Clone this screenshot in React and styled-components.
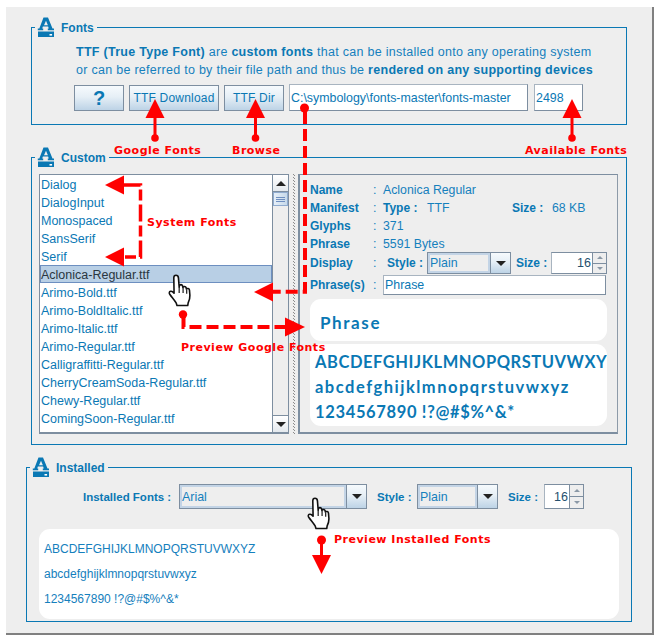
import React from 'react';
import styled, { createGlobalStyle } from 'styled-components';

const BLUE = '#0a78b4';
const EDGE = '#7d8ea0';
const SANS = '"Liberation Sans", Arial, sans-serif';

const Global = createGlobalStyle`
  html, body { margin: 0; padding: 0; background: #fff; }
  body { font-family: ${SANS}; }
`;

const Stage = styled.div`
  position: relative;
  width: 661px;
  height: 641px;
  padding: 7px 0 0 6px;
  box-sizing: border-box;
  overflow: hidden;
`;

const Win = styled.div`
  width: 648px;
  height: 628px;
  box-sizing: border-box;
  background: #eeeeee;
  border-right: 2px solid #808080;
  border-bottom: 2px solid #808080;
  padding: 20px 0 0 25px;
  display: flex;
  flex-direction: column;
  align-items: flex-start;
`;

const Group = styled.section`
  position: relative;
  box-sizing: border-box;
  border: 1px solid ${BLUE};
  width: ${p => p.$w}px;
  height: ${p => p.$h}px;
  margin: ${p => p.$m || '0'};
  padding: ${p => p.$pad || '0'};
`;

const Legend = styled.div`
  position: absolute;
  left: 3px;
  top: -11px;
  height: 20px;
  display: flex;
  align-items: center;
  gap: 6px;
  padding: 0 3px 0 2px;
  background: #eeeeee;
  color: ${BLUE};
  font: bold 12px ${SANS};
`;

const LegendText = styled.span`
  position: relative;
  top: 1px;
`;

const Intro = styled.p`
  margin: 0;
  color: #1580bd;
  font-size: 12.5px;
  line-height: 18px;
  letter-spacing: 0.28px;
  white-space: nowrap;
  b { color: ${BLUE}; }
`;

const ToolRow = styled.div`
  display: flex;
  align-items: flex-end;
  gap: 5px;
  margin: 5px 0 0 -2px;
`;

const Btn = styled.div`
  box-sizing: border-box;
  width: ${p => p.$w}px;
  height: 26px;
  border: 1px solid ${EDGE};
  background: linear-gradient(#f6fafd 0%, #e6eff6 45%, #bdd3e6 100%);
  color: ${BLUE};
  font-size: ${p => p.$big ? '20px' : '12px'};
  font-weight: ${p => p.$big ? 'bold' : 'normal'};
  letter-spacing: ${p => p.$big ? '0' : '0.2px'};
  display: flex;
  align-items: center;
  justify-content: center;
  white-space: nowrap;
`;

const TextBox = styled.div`
  box-sizing: border-box;
  width: ${p => p.$w}px;
  height: ${p => p.$h || 27}px;
  margin-left: ${p => p.$ml || 0}px;
  background: #fff;
  border: 1px solid ${EDGE};
  border-left-color: #a8b4c0;
  border-top-color: #a8b4c0;
  color: ${BLUE};
  font-size: 12.4px;
  padding-left: 1px;
  display: flex;
  align-items: center;
  white-space: nowrap;
  overflow: hidden;
`;

const Split = styled.div`
  display: flex;
  height: 260px;
`;

const ListFrame = styled.div`
  box-sizing: border-box;
  width: 250px;
  height: 260px;
  border: 1px solid ${EDGE};
  border-bottom-width: 2px;
  background: #fff;
  display: flex;
`;

const List = styled.ul`
  list-style: none;
  margin: 0;
  padding: 0;
  flex: 1;
  min-width: 0;
`;

const Item = styled.li`
  box-sizing: border-box;
  height: 18px;
  padding: 1px 0 0 1px;
  line-height: 18px;
  font-size: 12.5px;
  white-space: nowrap;
  color: ${p => p.$sel ? '#2a3640' : BLUE};
  background: ${p => p.$sel ? '#b8cfe5' : 'transparent'};
  box-shadow: ${p => p.$sel ? 'inset 0 0 0 1px #6d8fc0' : 'none'};
`;

const ScrollBar = styled.div`
  width: 15px;
  background: #eeeeee;
  border-left: 1px solid ${EDGE};
  display: flex;
  flex-direction: column;
`;

const ScrollEnd = styled.div`
  height: 17px;
  box-sizing: border-box;
  background: linear-gradient(#ffffff, #e4e9ee);
  display: flex;
  align-items: center;
  justify-content: center;
  border-${p => p.$down ? 'top' : 'bottom'}: 1px solid ${EDGE};
`;

const ScrollThumb = styled.div`
  height: 14px;
  box-sizing: border-box;
  background: linear-gradient(90deg, #e6eff8, #c6d9ea);
  border: 1px solid #8fabcf;
  display: flex;
  flex-direction: column;
  gap: 1px;
  align-items: center;
  justify-content: center;
  i { display: block; width: 9px; height: 1px; background: #6f8fc0; }
`;

const ScrollTrack = styled.div`
  flex: 1;
`;

const Arrow = styled.span`
  width: 0;
  height: 0;
  border-left: ${p => p.$s || 4}px solid transparent;
  border-right: ${p => p.$s || 4}px solid transparent;
  ${p => p.$up
    ? `border-bottom: ${p.$t || 4}px solid ${p.$c || '#222'};`
    : `border-top: ${p.$t || 4}px solid ${p.$c || '#222'};`}
`;

const Divider = styled.div`
  width: 9px;
  background-color: #eeeeee;
  background-image:
    repeating-linear-gradient(#8c8c8c 0 1px, transparent 1px 3px),
    repeating-linear-gradient(transparent 0 1px, #8c8c8c 1px 2px, transparent 2px 3px);
  background-size: 1px 100%, 1px 100%;
  background-position: 4px 0, 5px 0;
  background-repeat: no-repeat;
`;

const Detail = styled.div`
  box-sizing: border-box;
  width: 320px;
  height: 260px;
  border: 1px solid ${EDGE};
  border-left-width: 2px;
  border-bottom-width: 2px;
  border-right-color: #8d9aa8;
  padding: 6px 10px 0 10px;
  display: flex;
  flex-direction: column;
`;

const Info = styled.div`
  display: flex;
  align-items: center;
  height: ${p => p.$h || 18}px;
  font-size: 12.3px;
  color: #1580bd;
  white-space: nowrap;
  margin-top: ${p => p.$mt || 0}px;
`;

const Key = styled.b`
  width: 63px;
  font-size: 12px;
  color: ${BLUE};
`;

const Colon = styled.span`
  width: 10px;
`;

const Strong = styled.b`
  color: ${BLUE};
  font-size: 12px;
  width: ${p => p.$w ? p.$w + 'px' : 'auto'};
  margin-left: ${p => p.$ml || 0}px;
  flex: none;
`;

const Plainv = styled.span`
  width: ${p => p.$w ? p.$w + 'px' : 'auto'};
  flex: none;
`;

const Combo = styled.div`
  box-sizing: border-box;
  display: flex;
  width: ${p => p.$w}px;
  height: ${p => p.$h || 25}px;
  border: 1px solid ${EDGE};
  background: #eeeeee;
  flex: none;
`;

const ComboValue = styled.div`
  flex: 1;
  min-width: 0;
  box-sizing: border-box;
  border: 2px solid #c3d4e6;
  color: #1580bd;
  font-size: 12.4px;
  display: flex;
  align-items: center;
`;

const ComboBtn = styled.div`
  width: 19px;
  border-left: 1px solid ${EDGE};
  background: linear-gradient(#f6fafd, #e6eff6 45%, #bdd3e6);
  display: flex;
  align-items: center;
  justify-content: center;
`;

const Spinner = styled.div`
  box-sizing: border-box;
  display: flex;
  width: ${p => p.$w}px;
  height: ${p => p.$h || 25}px;
  background: #fff;
  border-top: 1px solid ${EDGE};
  border-left: 1px solid #a8b4c0;
  border-bottom: 1px solid ${EDGE};
  flex: none;
`;

const SpinValue = styled.div`
  flex: 1;
  display: flex;
  align-items: center;
  justify-content: flex-end;
  color: #26506e;
  font-size: 12.5px;
  padding-right: 1px;
`;

const SpinBtns = styled.div`
  width: 15px;
  box-sizing: border-box;
  display: flex;
  flex-direction: column;
  border: 1px solid ${EDGE};
  margin: -1px 0;
`;

const SpinBtn = styled.div`
  flex: 1;
  background: #eeeeee;
  display: flex;
  align-items: center;
  justify-content: center;
  ${p => p.$sep ? `border-top: 1px solid ${EDGE};` : ''}
`;

const Card = styled.div`
  background: #fff;
  border-radius: 11px;
  box-sizing: border-box;
  height: ${p => p.$h}px;
  margin-top: ${p => p.$mt || 0}px;
  padding: ${p => p.$pad || '0'};
  overflow: hidden;
`;

const PhraseText = styled.div`
  font: bold 17px Lato, sans-serif;
  color: ${BLUE};
  letter-spacing: 1.6px;
  padding: 13px 0 0 10px;
`;

const Glyphs = styled.div`
  padding-left: 5px;
  font: bold 16.5px/25px Lato, sans-serif;
  color: ${BLUE};
  white-space: nowrap;
  letter-spacing: ${p => p.$ls || 0}px;
  height: 25px;
`;

const InstalledRow = styled.div`
  display: flex;
  align-items: center;
  margin: 16px 0 0 56px;
  height: 25px;
  color: ${BLUE};
  white-space: nowrap;
`;

const RowLabel = styled.b`
  font-size: 11.5px;
  flex: none;
  width: ${p => p.$w}px;
  margin-left: ${p => p.$ml || 0}px;
`;

const InstalledCard = styled.div`
  background: #fff;
  border-radius: 11px;
  box-sizing: border-box;
  margin: 20px 0 0 12px;
  width: 580px;
  height: 90px;
  padding: 8px 0 0 5px;
  color: #1580bd;
  font-size: 12px;
`;

const SampleLine = styled.div`
  height: 25px;
  line-height: 24px;
  white-space: nowrap;
`;

const Note = styled.span`
  position: absolute;
  left: ${p => p.$x}px;
  top: ${p => p.$y}px;
  color: #ff0000;
  font: bold 11px/14px "DejaVu Sans", Verdana, sans-serif;
  white-space: nowrap;
  letter-spacing: 0.5px;
`;

const Overlay = styled.svg`
  position: absolute;
  left: 0;
  top: 0;
  pointer-events: none;
`;

const FontIcon = () => (
  <svg width="18" height="20" viewBox="0 0 18 20">
    <path
      d="M6.500 0.500h4.500l4.500 11h1.500v1.700h-6.200v-1.700h1l-.7-2h-5.200l-.7 2h1v1.700H.800v-1.700h1.500zM9 3.700l-2 4.500h3.900z"
      fill={BLUE}
      fillRule="evenodd"
    />
    <path d="M1 14.500h16V20H1z" fill={BLUE} />
    <rect x="12.500" y="17" width="2.600" height="1.600" fill="#fff" />
  </svg>
);

const HAND = 'M5.500 1.200c1.100 0 1.600.8 1.700 1.800l.5 6.300.2-.9c.3-1 1.800-1 2.100.1l.3 1.100c.3-.9 1.900-.9 2.200.2l.2.9c.5-.7 2-.4 2.100.7l.3 3.600c.1 1.900-.4 3.600-1.200 5.200l-.3 1.900H6.200l-.5-1.600C4.600 18.500 2.700 16.500 1.200 14.300c-.6-1-.3-1.800.5-2 .8-.3 1.700.3 2.500 1.300L4 3c0-1 .5-1.800 1.500-1.800z';

const Hand = ({ x, y }) => (
  <g transform={`translate(${x} ${y}) scale(1.45)`}>
    <path d={HAND} fill="#fff" stroke="#111" strokeWidth="1.100" strokeLinejoin="round" />
    <path d="M7.700 9.300v4.200M10.400 10v3.500M12.900 11v3" stroke="#111" strokeWidth=".8" fill="none" />
  </g>
);

const RED = '#ff0000';

const UpPin = ({ x, tip, end }) => (
  <g>
    <path d={`M${x} ${tip}l9.500 19h-19z`} fill={RED} />
    <path d={`M${x} ${tip + 18}V${end}`} stroke={RED} strokeWidth="3" />
    <circle cx={x} cy={end} r="3.800" fill={RED} />
  </g>
);

const Annotations = () => (
  <Overlay width="661" height="641" viewBox="0 0 661 641">
    <UpPin x={155} tip={99} end={138} />
    <UpPin x={255.5} tip={99} end={138} />
    <UpPin x={572} tip={99} end={138} />

    <circle cx={304.500} cy={108} r="4.500" fill={RED} />
    <path d="M305 112V291.700H272" stroke={RED} strokeWidth="4" strokeDasharray="12 5" fill="none" />
    <path d="M254 292l19-9.500v19z" fill={RED} />

    <path d="M124 185H140.500V257H124" stroke={RED} strokeWidth="3.500" strokeDasharray="17 4 11 4" fill="none" />
    <path d="M105 185l19-9.500v19z" fill={RED} />
    <path d="M105 257l19-9.500v19z" fill={RED} />

    <Hand x={168} y={273.5} />

    <circle cx={183} cy={314.500} r="4.200" fill={RED} />
    <path d="M183.500 316V327H286" stroke={RED} strokeWidth="4" strokeDasharray="12 5" fill="none" />
    <path d="M305 327l-20-9.500v19z" fill={RED} />

    <Hand x={307} y={496.5} />

    <circle cx={321.500} cy={540} r="4.500" fill={RED} />
    <path d="M321.500 541V556" stroke={RED} strokeWidth="3" />
    <path d="M321.500 574l-9.500-19h19z" fill={RED} />
  </Overlay>
);

const FILES = [
  'Dialog', 'DialogInput', 'Monospaced', 'SansSerif', 'Serif', 'Aclonica-Regular.ttf',
  'Arimo-Bold.ttf', 'Arimo-BoldItalic.ttf', 'Arimo-Italic.ttf', 'Arimo-Regular.ttf',
  'Calligraffitti-Regular.ttf', 'CherryCreamSoda-Regular.ttf', 'Chewy-Regular.ttf', 'ComingSoon-Regular.ttf',
];

const Select = ({ w, h, value }) => (
  <Combo $w={w} $h={h}>
    <ComboValue>{value}</ComboValue>
    <ComboBtn><Arrow $s={5} $t={5} /></ComboBtn>
  </Combo>
);

const Spin = ({ w, h }) => (
  <Spinner $w={w} $h={h}>
    <SpinValue>16</SpinValue>
    <SpinBtns>
      <SpinBtn><Arrow $up $s={3} $t={3} $c="#8a98a6" /></SpinBtn>
      <SpinBtn $sep><Arrow $s={3} $t={3} $c="#8a98a6" /></SpinBtn>
    </SpinBtns>
  </Spinner>
);

export default function App() {
  return (
    <Stage>
      <Global />
      <Win>
        <Group $w={596} $h={98} $pad="15px 0 0 44px">
          <Legend><FontIcon /><LegendText>Fonts</LegendText></Legend>
          <Intro>
            <b>TTF (True Type Font)</b> are <b>custom fonts</b> that can be installed onto any operating system
            <br />
            or can be referred to by their file path and thus be <b>rendered on any supporting devices</b>
          </Intro>
          <ToolRow>
            <Btn $w={50} $big>?</Btn>
            <Btn $w={90}>TTF Download</Btn>
            <Btn $w={60}>TTF Dir</Btn>
            <TextBox $w={239}>C:\symbology\fonts-master\fonts-master</TextBox>
            <TextBox $w={49} $ml={1}>2498</TextBox>
          </ToolRow>
        </Group>

        <Group $w={596} $h={288} $m="32px 0 0 0" $pad="16px 0 0 7px">
          <Legend><FontIcon /><LegendText>Custom</LegendText></Legend>
          <Split>
            <ListFrame>
              <List>
                {FILES.map(f => (
                  <Item key={f} $sel={f === 'Aclonica-Regular.ttf'}>{f}</Item>
                ))}
              </List>
              <ScrollBar>
                <ScrollEnd><Arrow $up $s={5} $t={5} /></ScrollEnd>
                <ScrollThumb><i /><i /><i /></ScrollThumb>
                <ScrollTrack />
                <ScrollEnd $down><Arrow $s={5} $t={5} /></ScrollEnd>
              </ScrollBar>
            </ListFrame>
            <Divider />
            <Detail>
              <Info><Key>Name</Key><Colon>:</Colon><Plainv>Aclonica Regular</Plainv></Info>
              <Info>
                <Key>Manifest</Key><Colon>:</Colon>
                <Strong $w={44}>Type :</Strong><Plainv $w={85}>TTF</Plainv>
                <Strong $w={40}>Size :</Strong><Plainv>68 KB</Plainv>
              </Info>
              <Info><Key>Glyphs</Key><Colon>:</Colon><Plainv>371</Plainv></Info>
              <Info><Key>Phrase</Key><Colon>:</Colon><Plainv>5591 Bytes</Plainv></Info>
              <Info $h={22} $mt={-1}>
                <Key>Display</Key><Colon>:</Colon>
                <Strong $w={40} $ml={4}>Style :</Strong>
                <Select w={84} h={22} value="Plain" />
                <Strong $w={35} $ml={5}>Size :</Strong>
                <Spin w={56} h={22} />
              </Info>
              <Info $h={20} $mt={1}>
                <Key>Phrase(s)</Key><Colon>:</Colon>
                <TextBox $w={223} $h={20}>Phrase</TextBox>
              </Info>
              <Card $h={42} $mt={4}><PhraseText>Phrase</PhraseText></Card>
              <Card $h={82} $mt={3} $pad="6px 0 0 0">
                <Glyphs $ls={0.55}>ABCDEFGHIJKLMNOPQRSTUVWXYZ</Glyphs>
                <Glyphs $ls={1.5}>abcdefghijklmnopqrstuvwxyz</Glyphs>
                <Glyphs $ls={0.65}>1234567890 !?@#$%^&amp;*</Glyphs>
              </Card>
            </Detail>
          </Split>
        </Group>

        <Group $w={606} $h={155} $m="22px 0 0 -5px">
          <Legend><FontIcon /><LegendText>Installed</LegendText></Legend>
          <InstalledRow>
            <RowLabel $w={96}>Installed Fonts :</RowLabel>
            <Select w={188} value="Arial" />
            <RowLabel $w={40} $ml={10}>Style :</RowLabel>
            <Select w={81} value="Plain" />
            <RowLabel $w={36} $ml={10}>Size :</RowLabel>
            <Spin w={40} />
          </InstalledRow>
          <InstalledCard>
            <SampleLine>ABCDEFGHIJKLMNOPQRSTUVWXYZ</SampleLine>
            <SampleLine>abcdefghijklmnopqrstuvwxyz</SampleLine>
            <SampleLine>1234567890 !?@#$%^&amp;*</SampleLine>
          </InstalledCard>
        </Group>
      </Win>
      <Annotations />
      <Note $x={114} $y={144}>Google Fonts</Note>
      <Note $x={232} $y={144}>Browse</Note>
      <Note $x={525} $y={144}>Available Fonts</Note>
      <Note $x={147} $y={216}>System Fonts</Note>
      <Note $x={181} $y={341}>Preview Google Fonts</Note>
      <Note $x={334} $y={533}>Preview Installed Fonts</Note>
    </Stage>
  );
}
